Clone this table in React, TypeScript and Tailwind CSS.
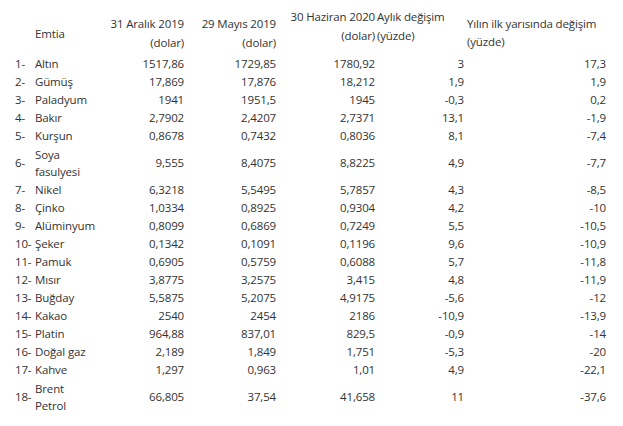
import { FC } from 'react';

type Row = {
  no: string;
  name: string[];
  dec: string;
  may: string;
  jun: string;
  month: string;
  half: string;
};

const rows: Row[] = [
  { no: '1-', name: ['Altın'], dec: '1517,86', may: '1729,85', jun: '1780,92', month: '3', half: '17,3' },
  { no: '2-', name: ['Gümüş'], dec: '17,869', may: '17,876', jun: '18,212', month: '1,9', half: '1,9' },
  { no: '3-', name: ['Paladyum'], dec: '1941', may: '1951,5', jun: '1945', month: '-0,3', half: '0,2' },
  { no: '4-', name: ['Bakır'], dec: '2,7902', may: '2,4207', jun: '2,7371', month: '13,1', half: '-1,9' },
  { no: '5-', name: ['Kurşun'], dec: '0,8678', may: '0,7432', jun: '0,8036', month: '8,1', half: '-7,4' },
  { no: '6-', name: ['Soya', 'fasulyesi'], dec: '9,555', may: '8,4075', jun: '8,8225', month: '4,9', half: '-7,7' },
  { no: '7-', name: ['Nikel'], dec: '6,3218', may: '5,5495', jun: '5,7857', month: '4,3', half: '-8,5' },
  { no: '8-', name: ['Çinko'], dec: '1,0334', may: '0,8925', jun: '0,9304', month: '4,2', half: '-10' },
  { no: '9-', name: ['Alüminyum'], dec: '0,8099', may: '0,6869', jun: '0,7249', month: '5,5', half: '-10,5' },
  { no: '10-', name: ['Şeker'], dec: '0,1342', may: '0,1091', jun: '0,1196', month: '9,6', half: '-10,9' },
  { no: '11-', name: ['Pamuk'], dec: '0,6905', may: '0,5759', jun: '0,6088', month: '5,7', half: '-11,8' },
  { no: '12-', name: ['Mısır'], dec: '3,8775', may: '3,2575', jun: '3,415', month: '4,8', half: '-11,9' },
  { no: '13-', name: ['Buğday'], dec: '5,5875', may: '5,2075', jun: '4,9175', month: '-5,6', half: '-12' },
  { no: '14-', name: ['Kakao'], dec: '2540', may: '2454', jun: '2186', month: '-10,9', half: '-13,9' },
  { no: '15-', name: ['Platin'], dec: '964,88', may: '837,01', jun: '829,5', month: '-0,9', half: '-14' },
  { no: '16-', name: ['Doğal gaz'], dec: '2,189', may: '1,849', jun: '1,751', month: '-5,3', half: '-20' },
  { no: '17-', name: ['Kahve'], dec: '1,297', may: '0,963', jun: '1,01', month: '4,9', half: '-22,1' },
  { no: '18-', name: ['Brent', 'Petrol'], dec: '66,805', may: '37,54', jun: '41,658', month: '11', half: '-37,6' },
];

const cols = 'grid grid-cols-[20px_65px_84px_92px_99px_89px_142px]';

const App: FC = () => {
  return (
    <div className="w-[623px] h-[426px] bg-white pl-[15px] text-[11.5px] tracking-[-0.15px] text-[#333] font-['Open_Sans',sans-serif]">
      <div className={`${cols} h-[55px] leading-[19px]`}>
        <div />
        <div className="pt-[24px]">Emtia</div>
        <div className="pt-[14px] text-right whitespace-nowrap">
          31 Aralık 2019
          <br />
          (dolar)
        </div>
        <div className="pt-[14px] text-right whitespace-nowrap">
          29 Mayıs 2019
          <br />
          (dolar)
        </div>
        <div className="pt-[7px] text-right whitespace-nowrap">
          30 Haziran 2020
          <br />
          (dolar)
        </div>
        <div className="pt-[7px] pl-[2px] whitespace-nowrap">
          Aylık değişim
          <br />
          (yüzde)
        </div>
        <div className="pt-[15px] pl-[3px] leading-[18px] whitespace-nowrap">
          Yılın ilk yarısında değişim
          <br />
          (yüzde)
        </div>
      </div>
      {rows.map((r) => (
        <div
          key={r.no}
          className={`${cols} items-center leading-[18px] ${r.name.length > 1 ? 'h-[36px]' : 'h-[18px]'}`}
        >
          <div className="whitespace-nowrap">{r.no}</div>
          <div className="whitespace-nowrap leading-[17.5px]">
            {r.name.map((n, i) => (
              <div key={i}>{n}</div>
            ))}
          </div>
          <div className="text-right">{r.dec}</div>
          <div className="text-right">{r.may}</div>
          <div className="text-right">{r.jun}</div>
          <div className="text-right">{r.month}</div>
          <div className="text-right">{r.half}</div>
        </div>
      ))}
    </div>
  );
};

export default App;
